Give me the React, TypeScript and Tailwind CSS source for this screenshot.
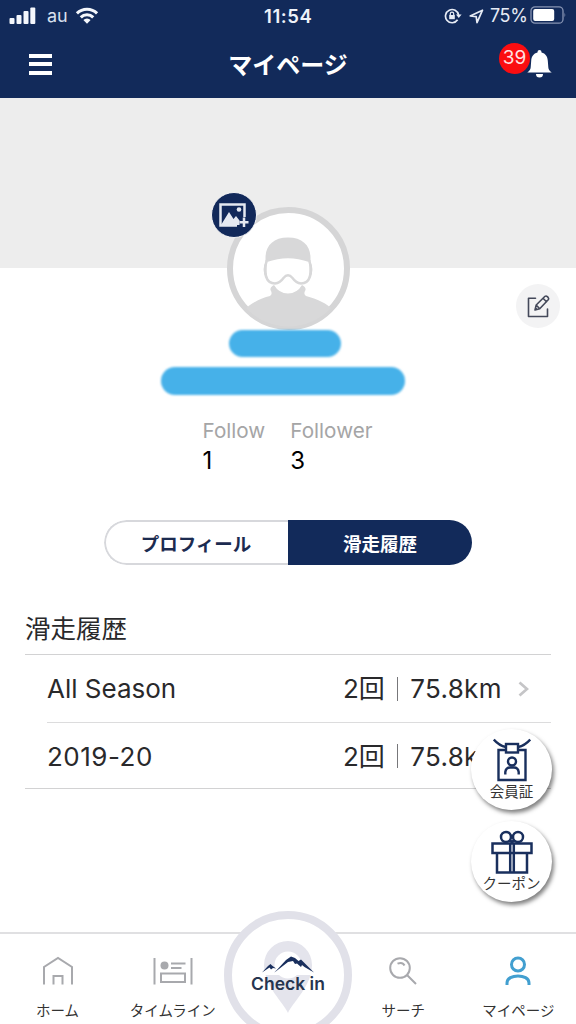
import React from 'react';

interface HistoryRow {
  season: string;
  count: string;
  distance: string;
}

const history: HistoryRow[] = [
  { season: 'All Season', count: '2回', distance: '75.8km' },
  { season: '2019-20', count: '2回', distance: '75.8km' },
];

const StatusBar: React.FC = () => (
  <div className="flex h-8 items-center text-[18px] leading-8">
    <svg className="ml-[9px] mt-[-2px]" width="27" height="17" viewBox="0 0 27 17" fill="#f4f7fc">
      <rect x="0.5" y="11" width="5" height="6" rx="1" />
      <rect x="7.5" y="8" width="5" height="9" rx="1" />
      <rect x="14.5" y="4" width="5" height="13" rx="1" />
      <rect x="21.3" y="0.5" width="5" height="16.5" rx="1" />
    </svg>
    <span className="ml-[11px] w-[21px] text-[#d9e0ee]">au</span>
    <svg className="ml-[7px] mt-[-2px]" width="24" height="17" viewBox="0 0 25 17" fill="none" stroke="#f4f7fc" strokeWidth="3.2">
      <path d="M2 6.2a15 15 0 0 1 21 0" />
      <path d="M6 10.5a9.2 9.2 0 0 1 13 0" />
      <path d="M8.7 13.2a5.4 5.4 0 0 1 7.6 0L12.5 17z" fill="#f4f7fc" stroke="none" />
    </svg>
    <span className="ml-[165px] w-[50px] whitespace-nowrap text-[18.5px] font-semibold tracking-[0.6px] text-[#eef2f9]">11:54</span>
    <svg className="ml-[130px]" width="18" height="16" viewBox="0 0 18 16" fill="none" stroke="#e6ebf5" strokeWidth="1.7">
      <path d="M13.6 11.8A6.6 6.6 0 1 1 14.6 7" />
      <path d="M12 6.5h5.6L14.8 10z" fill="#e6ebf5" stroke="none" />
      <rect x="5.2" y="7" width="5.6" height="4.2" fill="#e6ebf5" stroke="none" />
      <path d="M6.3 7V5.8a1.7 1.7 0 0 1 3.4 0V7" strokeWidth="1.2" />
    </svg>
    <svg className="ml-[7px]" width="15" height="15" viewBox="0 0 15 15" fill="none" stroke="#e6ebf5" strokeWidth="1.7" strokeLinejoin="round">
      <path d="M13.5 1.2L1.2 6.9l6 .8.8 6z" />
    </svg>
    <span className="ml-[6px] w-[40px] whitespace-nowrap text-[18px] tracking-[-0.4px] text-[#e6ebf5]">75%</span>
    <svg className="mt-[-2px]" width="37" height="18" viewBox="0 0 37 18">
      <rect x="1" y="0.8" width="32" height="16.4" rx="4" fill="none" stroke="#8794b3" strokeWidth="1.3" />
      <rect x="3.2" y="3" width="21" height="12" rx="2" fill="#fff" />
      <path d="M34.5 6.5q1.6 2.5 0 5z" fill="#8794b3" />
    </svg>
  </div>
);

const Header: React.FC = () => (
  <header className="h-[98px] shrink-0 bg-[#122a5a] text-white">
    <StatusBar />
    <div className="flex h-[64px] items-center justify-between">
      <div className="ml-[29px] flex w-[51px] flex-col gap-[4.5px]">
        <span className="h-1 w-[23px] bg-white" />
        <span className="h-1 w-[23px] bg-white" />
        <span className="h-1 w-[23px] bg-white" />
      </div>
      <h1 className="mt-[3px] text-[24px] font-bold leading-8">マイページ</h1>
      <div className="mr-[24px] flex w-[56px] items-center justify-end">
        <span className="mb-[11px] flex h-[31px] w-[31px] shrink-0 items-center justify-center rounded-full bg-[#fb0d10] text-[19px] text-[#ffe0e0]">
          39
        </span>
        <svg className="-ml-[3px] shrink-0" width="25" height="28" viewBox="0 0 25 28" fill="#fff">
          <path d="M12.5 0a2 2 0 0 1 2 2v.6c4 1 6 4 6.300 8.200l.5 6.400c.2 2 1 3.300 3.400 5.300H.3c2.400-2 3.200-3.300 3.400-5.300l.5-6.400c.3-4.200 2.300-7.200 6.300-8.200V2a2 2 0 0 1 2-2z" />
          <path d="M9 24h7a3.500 3.500 0 0 1-7 0z" />
        </svg>
      </div>
    </div>
  </header>
);

const Avatar: React.FC = () => (
  <div className="relative h-[123px] w-[123px]">
    <svg width="123" height="123" viewBox="0 0 123 123">
      <defs>
        <clipPath id="face">
          <circle cx="61.500" cy="61.500" r="58" />
        </clipPath>
      </defs>
      <circle cx="61.500" cy="61.500" r="58.500" fill="#fff" stroke="#d5d5d6" strokeWidth="6" />
      <g clipPath="url(#face)" fill="#d8d8d9">
        {/* jacket */}
        <path d="M16 104C24 96 34 91 43 89Q46 87 43.500 83Q43 80 47 78Q52 86.500 61 86.500Q70 86.500 75 78Q79 80 78.500 83Q76 87 79 89C90 92 100 96 107 104V123H16z" />
        {/* cap */}
        <path d="M38.500 51C38.500 39 46 30.500 61 30.500S83.500 39 83.500 51L83.500 54Q61 46 38.500 54z" />
        {/* goggles */}
        <path
          d="M39.500 54Q61 46 82.500 54C86 66 83 76.500 74 76.500Q69 76 65.500 71Q61 65.500 56.500 71Q53 76 48 76.500C39 76.500 36 66 39.500 54z"
          fill="#fff"
          stroke="#d8d8d9"
          strokeWidth="2.400"
        />
        <path d="M39 54Q34.500 62 38.500 70L42 74Q38 66 40.500 54zM83 54Q87.500 62 83.500 70L80 74Q84 66 81.500 54z" />
      </g>
    </svg>
    <div className="absolute -left-[16px] -top-[15px] flex h-[46px] w-[46px] items-center justify-center rounded-full border border-[#f5f5f6] bg-[#12295a]">
      <svg width="31" height="26" viewBox="0 0 31 26" fill="none">
        <path d="M19 23.500H2.500V2.500H26.500V15" stroke="#e5e9f1" strokeWidth="2.500" />
        <path d="M3 23L11 10l4.500 7 2.500-3 3.500 4.500V23z" fill="#e5e9f1" />
        <circle cx="21" cy="7.500" r="2.300" fill="#e5e9f1" />
        <path d="M26 15.500V25M21.500 20.200H30.500" stroke="#e5e9f1" strokeWidth="2.500" />
      </svg>
    </div>
  </div>
);

const ProfileSection: React.FC = () => (
  <section className="flex shrink-0 flex-col">
    <div className="flex h-[170px] justify-center bg-[#ededed] pt-[109px]">
      <Avatar />
    </div>
    <div className="relative flex h-[252px] flex-col items-center pt-[62px]">
      <button className="absolute right-[16px] top-[16px] flex h-[44px] w-[44px] items-center justify-center rounded-full bg-[#f3f3f4]">
        <svg width="23" height="23" viewBox="0 0 23 23" fill="none" stroke="#44495a" strokeWidth="1.600" strokeLinecap="round" strokeLinejoin="round">
          <path d="M8.500 3.200H1.500V21.500H20.500V14" />
          <path d="M8 15l1.200-5L18 1.300q1.200-.8 2.300.3l.8.800q1 1.200.1 2.300L12.700 13.700zM9.200 10l3.500 3.700M16 3.300l3.500 3.500M8 15l1.300-1.300" />
        </svg>
      </button>
      {/* masked name and id */}
      <div className="-ml-[7px] h-[27px] w-[112px] rounded-full bg-[#46b1e9] blur-[1px]" />
      <div className="-ml-[10px] mt-[10px] h-[28px] w-[244px] rounded-full bg-[#46b1e9] blur-[1px]" />
      <dl className="mt-[22px] flex w-[171px] gap-[25px] text-[#a5a5a6]">
        <div>
          <dt className="text-[20.700px] leading-[27px]">Follow</dt>
          <dd className="mt-0.5 text-[24px] leading-[30px] text-black">1</dd>
        </div>
        <div>
          <dt className="text-[20.700px] leading-[27px]">Follower</dt>
          <dd className="mt-0.5 text-[24px] leading-[30px] text-black">3</dd>
        </div>
      </dl>
    </div>
  </section>
);

const Chevron: React.FC = () => (
  <svg width="11" height="16" viewBox="0 0 11 16" fill="none" stroke="#c5c5c7" strokeWidth="2.800">
    <path d="M1.500 1.500L9 8l-7.500 6.500" />
  </svg>
);

const HistoryList: React.FC = () => (
  <section className="ml-[25px] mr-[25px] mt-[44px] text-[#29292b]">
    <h2 className="h-[45px] text-[25.500px] leading-[39px]">滑走履歴</h2>
    <ul className="border-y border-[#d2d2d3]">
      {history.map((row, i) => (
        <li
          key={row.season}
          className={`ml-[22px] flex items-center text-[26px] ${i > 0 ? 'h-[66px] border-t border-[#dcdcdd] pt-px' : 'h-[67px]'}`}
        >
          <span className={i > 0 ? 'flex-1 tracking-[0.500px]' : 'flex-1'}>{row.season}</span>
          <span className="flex w-[160px] items-center whitespace-nowrap">
            <span>{row.count}</span>
            <span className="mx-[12px] h-[24px] w-[1.500px] bg-[#77777a]" />
            <span className="tracking-[0.300px]">{row.distance}</span>
          </span>
          <span className="ml-[15px] mr-[22px]">
            <Chevron />
          </span>
        </li>
      ))}
    </ul>
  </section>
);

const FloatingButtons: React.FC = () => (
  <div className="absolute right-[24px] top-[729px] flex flex-col gap-[11px] text-[14.500px] leading-[18px] text-[#333]">
    <button className="flex h-[81px] w-[81px] flex-col items-center rounded-full bg-white pt-[9px] shadow-[2px_3px_4px_rgba(0,0,0,0.5)]">
      <svg width="38" height="44" viewBox="0 0 38 44" fill="none" stroke="#192f5d" strokeWidth="2.400">
        <path d="M.8 1.500Q6 7.500 13 9M37.200 1.500Q32 7.500 25 9" />
        <path d="M13 12H5.500V42H32.500V12H25" />
        <rect x="13" y="6" width="12" height="8.500" />
        <circle cx="19" cy="23.500" r="4" />
        <path d="M12.300 36.500V34Q13 29.500 17 29.500h4Q25 29.500 25.700 34v2.500" />
      </svg>
      <span className="mt-px">会員証</span>
    </button>
    <button className="flex h-[81px] w-[81px] flex-col items-center rounded-full bg-white pt-[9px] shadow-[2px_3px_4px_rgba(0,0,0,0.5)]">
      <svg width="42" height="44" viewBox="0 0 42 44" fill="none" stroke="#192f5d" strokeWidth="2.500">
        <rect x="1.500" y="13.500" width="39" height="9.500" />
        <path d="M6 23V42.500H36V23M19.200 13.500v29M22.800 13.500v29" />
        <circle cx="15" cy="7" r="5" />
        <circle cx="27" cy="7" r="5" />
        <path d="M19 10Q20.500 11 21 13.500Q21.500 11 23 10" />
      </svg>
      <span className="mt-px">クーポン</span>
    </button>
  </div>
);

const HomeIcon: React.FC = () => (
  <svg width="32" height="30" viewBox="0 0 32 30" fill="none" stroke="#a8a9ad" strokeWidth="2">
    <path d="M2 28.500V11L16 2L30 11V28.500" />
    <path d="M11.500 28.500V20H20.500V28.500" />
  </svg>
);

const TimelineIcon: React.FC = () => (
  <svg width="40" height="30" viewBox="0 0 40 30" fill="none" stroke="#a8a9ad" strokeWidth="2">
    <path d="M1.500 2V28.500M38.500 2V28.500M18 7.500H32.500M18 12H28.500" />
    <circle cx="11.500" cy="9.500" r="4" fill="#a8a9ad" stroke="none" />
    <rect x="8" y="17.500" width="24" height="8.500" />
  </svg>
);

const SearchIcon: React.FC = () => (
  <svg width="30" height="30" viewBox="0 0 30 30" fill="none" stroke="#a8a9ad" strokeWidth="2">
    <circle cx="12" cy="12" r="9.800" />
    <path d="M19 19L28 28M9.500 7.700Q14.500 5.500 16.500 9.500" />
  </svg>
);

const UserIcon: React.FC = () => (
  <svg width="26" height="30" viewBox="0 0 26 30" fill="none" stroke="#429fd0" strokeWidth="3">
    <circle cx="13" cy="8.500" r="6.500" />
    <path d="M2 29V27C2 17.500 24 17.500 24 27V29" />
  </svg>
);

interface NavItemProps {
  label: string;
  children: React.ReactNode;
}

const NavItem: React.FC<NavItemProps> = ({ label, children }) => (
  <a className="flex flex-col items-center pt-[22px]">
    {children}
    <span className="mt-[15px] whitespace-nowrap text-[14.500px] leading-[20px] text-[#333]">{label}</span>
  </a>
);

const CheckIn: React.FC = () => (
  <div className="relative">
    <div className="absolute -top-[23px] left-1/2 flex h-[128px] w-[128px] -translate-x-1/2 flex-col items-center rounded-full border-8 border-[#e1e1e9] bg-white">
      <svg className="mt-[22px]" width="54" height="72" viewBox="0 0 54 72">
        <path d="M27 72C23 62 3 45 3 24a24 24 0 0 1 48 0C51 45 31 62 27 72z" fill="#e4e4ec" />
        <circle cx="27" cy="24" r="13.500" fill="#fff" />
        <path d="M1 32L9.500 24L15 28L13 32L29 16L53 32V34H1z" fill="#fff" />
        <path d="M1 31.500L7 25 9.500 23 11 24.500 15 27.500 12 27 10 28.500 8.500 26.500z" fill="#192f5d" />
        <path d="M13.500 31.500L25 19 30 15.500 34 17 37.500 20 40 18.500 43 21.500 53 31.500 43.500 26 41 24 40 26 36 22.500 34 23 32 20 27 21z" fill="#192f5d" />
      </svg>
      <span className="absolute top-[54px] whitespace-nowrap text-[17.500px] font-semibold leading-[22px] text-[#26344f]">Check in</span>
    </div>
  </div>
);

const BottomNav: React.FC = () => (
  <nav className="grid h-[92px] shrink-0 grid-cols-5 border-t-2 border-[#e0e0e2] bg-white">
    <NavItem label="ホーム">
      <HomeIcon />
    </NavItem>
    <NavItem label="タイムライン">
      <TimelineIcon />
    </NavItem>
    <CheckIn />
    <NavItem label="サーチ">
      <SearchIcon />
    </NavItem>
    <NavItem label="マイページ">
      <UserIcon />
    </NavItem>
  </nav>
);

const App: React.FC = () => {
  return (
    <div className="relative flex h-[1024px] w-[576px] flex-col overflow-hidden bg-white font-['Inter','Noto_Sans_CJK_JP',sans-serif]">
      <Header />
      <ProfileSection />
      <div className="mx-auto grid h-[45px] w-[368px] shrink-0 grid-cols-2 overflow-hidden rounded-full text-[18.500px] font-bold">
        <button className="rounded-l-full border-2 border-r-0 border-[#d7d8dc] pt-[4px] pr-[2px] text-[#1c2b50]">プロフィール</button>
        <button className="bg-[#122a5a] pt-[4px] text-white">滑走履歴</button>
      </div>
      <HistoryList />
      <div className="flex-1" />
      <FloatingButtons />
      <BottomNav />
    </div>
  );
};

export default App;
